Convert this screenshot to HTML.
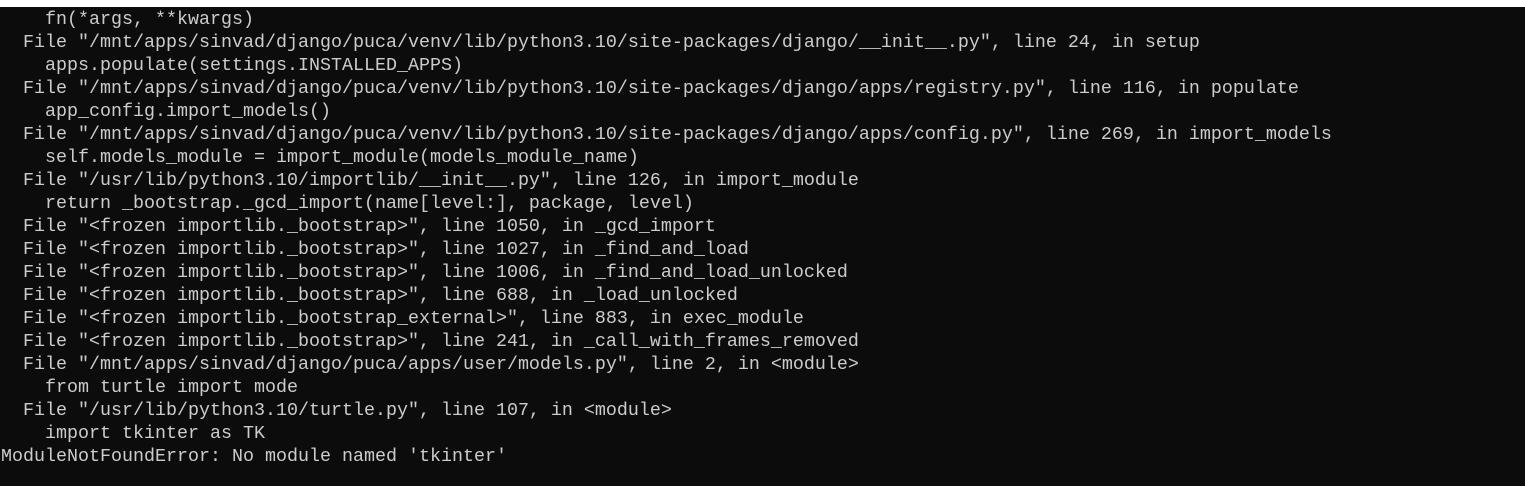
<!DOCTYPE html>
<html><head><meta charset="utf-8"><style>
html,body{margin:0;padding:0;width:1525px;height:486px;overflow:hidden;background:#fff}
#t{position:absolute;top:7px;left:0;width:1525px;height:479px;background:#0c0c0c}
pre{margin:0;position:absolute;top:8px;left:1px;font-family:"Liberation Mono",monospace;font-size:18.33px;line-height:23px;color:#cccccc}
</style></head><body><div id="t"></div><pre>    fn(*args, **kwargs)
  File "/mnt/apps/sinvad/django/puca/venv/lib/python3.10/site-packages/django/__init__.py", line 24, in setup
    apps.populate(settings.INSTALLED_APPS)
  File "/mnt/apps/sinvad/django/puca/venv/lib/python3.10/site-packages/django/apps/registry.py", line 116, in populate
    app_config.import_models()
  File "/mnt/apps/sinvad/django/puca/venv/lib/python3.10/site-packages/django/apps/config.py", line 269, in import_models
    self.models_module = import_module(models_module_name)
  File "/usr/lib/python3.10/importlib/__init__.py", line 126, in import_module
    return _bootstrap._gcd_import(name[level:], package, level)
  File "&lt;frozen importlib._bootstrap&gt;", line 1050, in _gcd_import
  File "&lt;frozen importlib._bootstrap&gt;", line 1027, in _find_and_load
  File "&lt;frozen importlib._bootstrap&gt;", line 1006, in _find_and_load_unlocked
  File "&lt;frozen importlib._bootstrap&gt;", line 688, in _load_unlocked
  File "&lt;frozen importlib._bootstrap_external&gt;", line 883, in exec_module
  File "&lt;frozen importlib._bootstrap&gt;", line 241, in _call_with_frames_removed
  File "/mnt/apps/sinvad/django/puca/apps/user/models.py", line 2, in &lt;module&gt;
    from turtle import mode
  File "/usr/lib/python3.10/turtle.py", line 107, in &lt;module&gt;
    import tkinter as TK
ModuleNotFoundError: No module named 'tkinter'</pre></body></html>
